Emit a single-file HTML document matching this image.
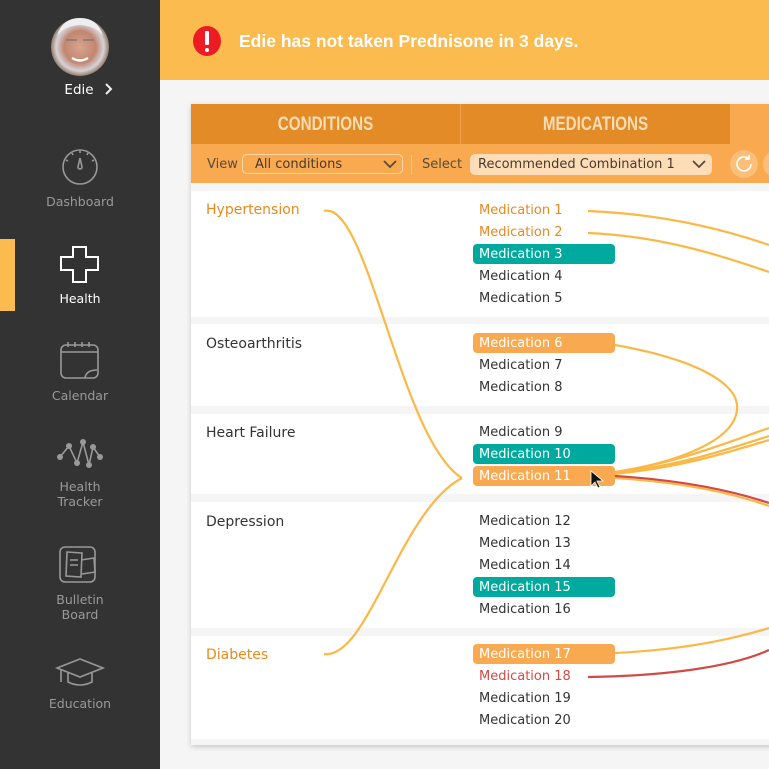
<!DOCTYPE html>
<html><head><meta charset="utf-8"><style>
*{margin:0;padding:0;box-sizing:border-box}
body{width:769px;height:769px;overflow:hidden;background:#f5f5f5;font-family:"DejaVu Sans","Liberation Sans",sans-serif;position:relative}
#side{position:absolute;left:0;top:0;width:160px;height:769px;background:#333}
.lbl{position:absolute;left:0;width:160px;text-align:center;color:#999;font-size:12.5px;line-height:15px}
#banner{position:absolute;left:160px;top:0;width:609px;height:80px;background:#FBBB4F}
#card{position:absolute;left:191px;top:104px;width:600px;height:641px;background:#f5f5f5;box-shadow:0 2px 5px rgba(0,0,0,.18)}
.sec{position:absolute;left:0;width:600px;background:#fff}
.t{position:absolute;font-size:13px;color:#333;white-space:nowrap;line-height:20px;margin-top:2px}
.c{position:absolute;left:15px;font-size:14px;color:#333;line-height:20px;margin-top:1px}
.o{color:#E8891E}
.b{position:absolute;left:282px;width:142px;height:20px;border-radius:4px}
</style></head><body>
<div id="side">
 <svg width="160" height="769" style="position:absolute;left:0;top:0">
  <defs><radialGradient id="g" cx="50%" cy="50%" r="55%"><stop offset="0" stop-color="#d9a48e"/><stop offset=".5" stop-color="#c08670"/><stop offset=".75" stop-color="#d8d2d6"/><stop offset="1" stop-color="#6a4a30"/></radialGradient></defs>
  <circle cx="80" cy="47" r="29" fill="url(#g)"/>
  <path d="M57 36 Q62 18 80 18 Q98 18 103 36 Q96 26 80 25 Q64 26 57 36Z" fill="#eeeef2"/>
  <path d="M66 40 h11 M83 40 h11" stroke="#8a7570" stroke-width="1.5"/>
  <path d="M72 58 q8 5 16 0" stroke="#fff" stroke-width="2.5" fill="none"/>
  <path d="M106 84 l5 5 -5 5" stroke="#eee" stroke-width="2" fill="none"/>
  <g stroke="#999" stroke-width="1.6" fill="none">
   <circle cx="80" cy="167" r="17"/>
   <path d="M80 158 l-2 9 a2 2 0 0 0 4 0z"/>
   <path d="M66 160 l2 1 M94 160 l-2 1 M72 153 l1 2 M88 153 l-1 2 M80 151 v2"/>
  </g>
  <rect x="0" y="239" width="15" height="72" fill="#FBBB4F"/>
  <path d="M73 247 h13 v10 h12 v13 h-12 v12 h-13 v-12 h-12 v-13 h12z" stroke="#fff" stroke-width="2" fill="none"/>
  <g stroke="#999" stroke-width="1.6" fill="none">
   <rect x="61" y="345" width="37" height="33" rx="5"/>
   <path d="M61 352 h37 M68 342 v5 M75 342 v5 M82 342 v5 M89 342 v5 M85 378 q1 -8 12 -8"/>
   <path d="M60 457 l9 -11 l8 17 l6 -21 l6 23 l4 -18 l7 10"/>
   <rect x="60" y="547" width="35" height="35" rx="5"/>
   <path d="M67 552 l15 1 -1 24 -15 -1z M81 560 l13 -2 1 14 -13 2 M70 560 h8 M70 565 h8"/>
   <path d="M57 668 l23 -9 23 9 -23 9z M68 672 v10 q12 6 24 0 v-10 M61 670 v12"/>
  </g>
  <g fill="#999"><circle cx="60" cy="457" r="3"/><circle cx="69" cy="446" r="3"/><circle cx="77" cy="463" r="3"/><circle cx="83" cy="442" r="3"/><circle cx="89" cy="465" r="3"/><circle cx="93" cy="447" r="3"/><circle cx="100" cy="457" r="3"/></g>
 </svg>
 <div class="lbl" style="top:83px;color:#fff;font-size:13.5px;left:-1px">Edie</div>
 <div class="lbl" style="top:194px">Dashboard</div>
 <div class="lbl" style="top:291px;color:#fff">Health</div>
 <div class="lbl" style="top:388px">Calendar</div>
 <div class="lbl" style="top:479px">Health<br>Tracker</div>
 <div class="lbl" style="top:592px">Bulletin<br>Board</div>
 <div class="lbl" style="top:696px">Education</div>
</div>
<div id="banner">
 <svg width="40" height="40" style="position:absolute;left:28px;top:22px"><ellipse cx="19" cy="19" rx="14" ry="15" fill="#ED1C24"/><rect x="17" y="9" width="4" height="14" rx="1" fill="#fff"/><circle cx="19" cy="28" r="2" fill="#fff"/></svg>
 <div style="position:absolute;left:79px;top:31px;color:#fff;font-weight:bold;font-size:17.5px;font-family:'Liberation Sans',sans-serif">Edie has not taken Prednisone in 3 days.</div>
</div>
<div id="card">
 <div style="position:absolute;left:0;top:0;width:600px;height:40px;background:#F9A94F"></div>
 <div style="position:absolute;left:0;top:0;width:539px;height:40px;background:#E38B27"></div>
 <div style="position:absolute;left:269px;top:0;width:1px;height:40px;background:#F2A24D"></div>
 <div style="position:absolute;left:0;top:10px;width:269px;text-align:center;color:#FBDDB5;font-weight:bold;font-size:19px;font-family:'Liberation Sans Narrow','Liberation Sans',sans-serif;transform:scaleX(.8)">CONDITIONS</div>
 <div style="position:absolute;left:270px;top:10px;width:269px;text-align:center;color:#FBDDB5;font-weight:bold;font-size:19px;font-family:'Liberation Sans Narrow','Liberation Sans',sans-serif;transform:scaleX(.8)">MEDICATIONS</div>
 <div style="position:absolute;left:0;top:40px;width:600px;height:39px;background:#F9A94F"></div>
 <div class="t" style="left:16px;top:49px;color:#5a4a3a">View</div>
 <div style="position:absolute;left:51px;top:50px;width:161px;height:20px;border:1px solid #FCD8A8;border-radius:5px"></div>
 <div class="t" style="left:64px;top:49px;color:#4a3a2a">All conditions</div>
 <svg width="14" height="10" style="position:absolute;left:192px;top:56px"><path d="M1 1 l6 6 6 -6" stroke="#5a4a3a" stroke-width="1.8" fill="none"/></svg>
 <div style="position:absolute;left:220px;top:51px;width:1px;height:20px;background:#FCC98A"></div>
 <div class="t" style="left:231px;top:49px;color:#5a4a3a">Select</div>
 <div style="position:absolute;left:279px;top:50px;width:242px;height:21px;background:#FDDDB8;border-radius:5px"></div>
 <div class="t" style="left:287px;top:49px;color:#4a3a2a">Recommended Combination 1</div>
 <svg width="14" height="10" style="position:absolute;left:501px;top:56px"><path d="M1 1 l6 6 6 -6" stroke="#5a4a3a" stroke-width="1.8" fill="none"/></svg>
 <div style="position:absolute;left:539px;top:46px;width:28px;height:28px;border-radius:50%;background:#FBBF7A"></div>
 <svg width="20" height="20" style="position:absolute;left:543px;top:50px"><path d="M15 5 A7 7 0 1 0 17 10 M15 1 v4 h-4" stroke="#fff" stroke-width="1.6" fill="none"/></svg>
 <div style="position:absolute;left:572px;top:46px;width:28px;height:28px;border-radius:50%;background:#FBBF7A"></div>

 <div class="sec" style="top:87px;height:126px"></div>
 <div class="sec" style="top:220px;height:82px"></div>
 <div class="sec" style="top:310px;height:80px"></div>
 <div class="sec" style="top:398px;height:126px"></div>
 <div class="sec" style="top:532px;height:103px"></div>

 <div class="c o" style="top:95px">Hypertension</div>
 <div class="c" style="top:229px">Osteoarthritis</div>
 <div class="c" style="top:318px">Heart Failure</div>
 <div class="c" style="top:407px">Depression</div>
 <div class="c o" style="top:540px">Diabetes</div>

 <div class="b" style="top:140px;background:#00A99D"></div>
 <div class="b" style="top:229px;background:#F9A94F"></div>
 <div class="b" style="top:340px;background:#00A99D"></div>
 <div class="b" style="top:362px;background:#F9A94F"></div>
 <div class="b" style="top:473px;background:#00A99D"></div>
 <div class="b" style="top:540px;background:#F9A94F"></div>

 <div class="t o" style="left:288px;top:95px">Medication 1</div>
 <div class="t o" style="left:288px;top:117px">Medication 2</div>
 <div class="t" style="left:288px;top:139px;color:#fff">Medication 3</div>
 <div class="t" style="left:288px;top:161px">Medication 4</div>
 <div class="t" style="left:288px;top:183px">Medication 5</div>
 <div class="t" style="left:288px;top:228px;color:#fff">Medication 6</div>
 <div class="t" style="left:288px;top:250px">Medication 7</div>
 <div class="t" style="left:288px;top:272px">Medication 8</div>
 <div class="t" style="left:288px;top:317px">Medication 9</div>
 <div class="t" style="left:288px;top:339px;color:#fff">Medication 10</div>
 <div class="t" style="left:288px;top:361px;color:#fff">Medication 11</div>
 <div class="t" style="left:288px;top:406px">Medication 12</div>
 <div class="t" style="left:288px;top:428px">Medication 13</div>
 <div class="t" style="left:288px;top:450px">Medication 14</div>
 <div class="t" style="left:288px;top:472px;color:#fff">Medication 15</div>
 <div class="t" style="left:288px;top:494px">Medication 16</div>
 <div class="t" style="left:288px;top:539px;color:#fff">Medication 17</div>
 <div class="t" style="left:288px;top:561px;color:#D14A45">Medication 18</div>
 <div class="t" style="left:288px;top:583px">Medication 19</div>
 <div class="t" style="left:288px;top:605px">Medication 20</div>
</div>
<svg width="769" height="769" style="position:absolute;left:0;top:0;pointer-events:none">
 <g stroke="#FBB847" stroke-width="2.2" fill="none">
  <path d="M324 211 C368 200 400 440 462 478"/>
  <path d="M324 654 C368 660 400 510 462 478"/>
  <path d="M588 211 C660 214 720 228 769 245"/>
  <path d="M588 233 C660 236 720 255 769 272"/>
  <path d="M615 345 C700 360 740 385 737 410 C734 440 680 462 615 472"/>
  <path d="M615 472 C680 462 720 445 769 428"/>
  <path d="M615 473 C680 465 720 452 769 436"/>
  <path d="M615 474 C680 467 720 455 769 440"/>
  <path d="M615 653 C680 650 730 640 769 628"/>
  <path d="M615 478 C680 482 730 492 769 506"/>
 </g>
 <g stroke="#D14A45" stroke-width="2.2" fill="none">
  <path d="M615 476 C680 480 730 490 769 503"/>
  <path d="M588 677 C660 676 730 668 769 650"/>
 </g>
 <path d="M591 471 v15 l4 -4 3 6 2 -1 -3 -6 h6z" fill="#111" stroke="#fff" stroke-width=".8"/>
</svg>
</body></html>
